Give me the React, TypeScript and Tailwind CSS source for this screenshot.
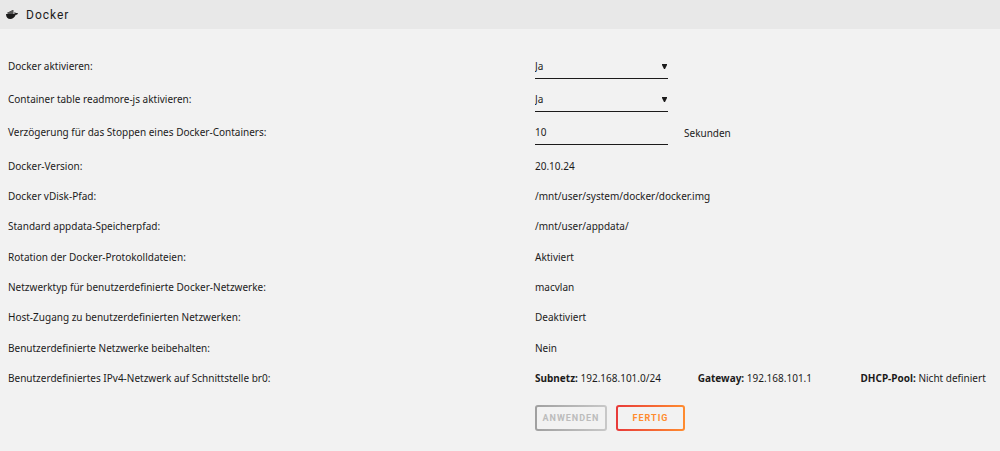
import { useState } from 'react';
import type { ReactNode } from 'react';

const settingGroups = [
    [
        { label: "Docker-Version:", value: "20.10.24" },
        { label: "Docker vDisk-Pfad:", value: "/mnt/user/system/docker/docker.img" },
        { label: "Standard appdata-Speicherpfad:", value: "/mnt/user/appdata/" }
    ],
    [
        { label: "Rotation der Docker-Protokolldateien:", value: "Aktiviert" },
        { label: "Netzwerktyp für benutzerdefinierte Docker-Netzwerke:", value: "macvlan" },
        { label: "Host-Zugang zu benutzerdefinierten Netzwerken:", value: "Deaktiviert" }
    ]
];

const br0 = [
    { name: "Subnetz:", value: "192.168.101.0/24" },
    { name: "Gateway:", value: "192.168.101.1" },
    { name: "DHCP-Pool:", value: "Nicht definiert" }
];

function DockerIcon() {
    return (
        <svg viewBox="0 0 24 18" className="h-[9px] w-3 shrink-0" aria-hidden="true">
            {/* container stack */}
            <path d="M3 4h4v5H3zM7 2h4v7H7zM11 0h4v9h-4z" fill="#555" />
            {/* whale */}
            <path d="M0 8h16.500c1-1.200.8-3 .4-4 1.500.4 2.400 1.400 2.700 2.400 1.500-.5 3.200-.3 4.400.5-.8 1.700-2.400 2.500-4.600 2.500C17.500 14.500 13.500 18 8.500 18 3.500 18 0 14.500 0 8z" fill="#1c1b1b" />
        </svg>
    );
}

function FormRow({ label, htmlFor, children }: { label: string; htmlFor: string; children: ReactNode }) {
    return (
        <div className="grid h-[33px] grid-cols-[53.5%_1fr] items-center">
            <label htmlFor={htmlFor} className="pb-[2px] pl-2">{label}</label>
            <div className="flex items-center gap-4">{children}</div>
        </div>
    );
}

function TextRow({ label, children }: { label: string; children: ReactNode }) {
    return (
        <div className="grid h-[30px] grid-cols-[53.5%_1fr] items-center">
            <dt className="pl-2">{label}</dt>
            <dd>{children}</dd>
        </div>
    );
}

function YesNoSelect({ id }: { id: string }) {
    const [value, setValue] = useState("Ja");

    return (
        <div className="relative w-[133px]">
            <select
                id={id}
                value={value}
                onChange={(e) => setValue(e.target.value)}
                className="block h-[25px] w-full appearance-none border-b border-[#1c1b1b] bg-transparent outline-none"
            >
                <option>Ja</option>
                <option>Nein</option>
            </select>
            <svg viewBox="0 0 5 5" className="pointer-events-none absolute right-px top-[10px] size-[5px]" aria-hidden="true">
                <path d="M0 0h5v1L3 5H2L0 1z" fill="#1c1b1b" />
            </svg>
        </div>
    );
}

export default function App() {
    const [delay, setDelay] = useState("10");

    return (
        <div className="min-h-screen bg-[#f2f2f2] font-['Noto_Sans',sans-serif] text-[10px] leading-4 text-[#1c1b1b]">
            <header className="flex h-[29px] items-center gap-2 bg-[#e8e8e8] pl-[6px]">
                <DockerIcon />
                <h1 className="font-['Roboto',sans-serif] text-xs tracking-[1px]">Docker</h1>
            </header>

            <form className="pt-[21px]" onSubmit={(e) => e.preventDefault()}>
                <FormRow label="Docker aktivieren:" htmlFor="docker-enabled">
                    <YesNoSelect id="docker-enabled" />
                </FormRow>
                <FormRow label="Container table readmore-js aktivieren:" htmlFor="readmore">
                    <YesNoSelect id="readmore" />
                </FormRow>
                <FormRow label="Verzögerung für das Stoppen eines Docker-Containers:" htmlFor="stop-delay">
                    <input
                        id="stop-delay"
                        type="text"
                        value={delay}
                        onChange={(e) => setDelay(e.target.value)}
                        className="h-[25px] w-[133px] border-b border-[#1c1b1b] bg-transparent outline-none"
                    />
                    <span>Sekunden</span>
                </FormRow>

                <div className="mt-[2px] space-y-px">
                    {settingGroups.map((group, index) => (
                        <dl key={index}>
                            {group.map((row) => (
                                <TextRow key={row.label} label={row.label}>{row.value}</TextRow>
                            ))}
                        </dl>
                    ))}
                    <dl>
                        <TextRow label="Benutzerdefinierte Netzwerke beibehalten:">Nein</TextRow>
                        <TextRow label="Benutzerdefiniertes IPv4-Netzwerk auf Schnittstelle br0:">
                            <div className="grid grid-cols-[35%_35%_1fr] whitespace-nowrap">
                                {br0.map((item) => (
                                    <span key={item.name}><b>{item.name}</b> {item.value}</span>
                                ))}
                            </div>
                        </TextRow>
                    </dl>
                </div>

                <div className="ml-[53.5%] mt-3 flex gap-[9px] font-['Roboto',sans-serif] text-[9px] font-bold tracking-[1px]">
                    <button
                        type="button"
                        disabled
                        className="h-[26px] w-[72px] rounded-[3px] border-2 border-transparent text-[#bcbcbc] [background:linear-gradient(#f2f2f2,#f2f2f2)_padding-box,linear-gradient(90deg,#a0a0a0,#c8c8c8)_border-box]"
                    >
                        ANWENDEN
                    </button>
                    <button
                        type="submit"
                        className="h-[26px] w-[69px] rounded-[3px] border-2 border-transparent text-[#ff8c2f] [background:linear-gradient(#f2f2f2,#f2f2f2)_padding-box,linear-gradient(90deg,#e83a3a,#ff8c2f)_border-box]"
                    >
                        FERTIG
                    </button>
                </div>
            </form>
        </div>
    );
}
